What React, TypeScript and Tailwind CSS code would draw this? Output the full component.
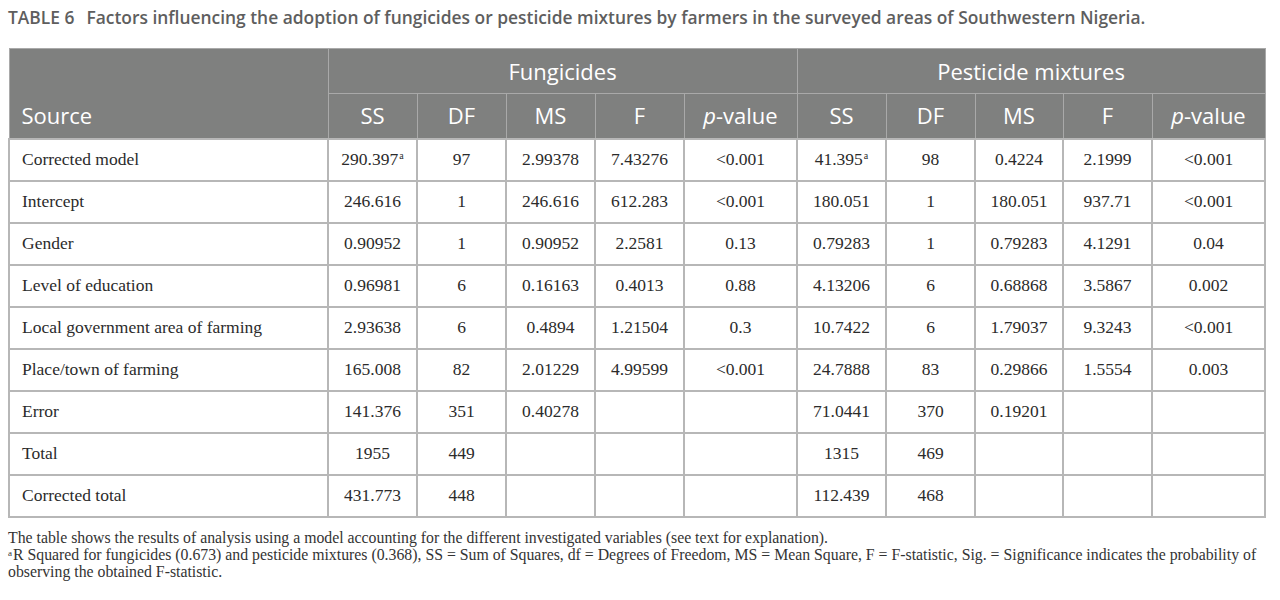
const rows: { src: string; f: string[]; p: string[]; fSup?: boolean; pSup?: boolean }[] = [
  { src: "Corrected model", f: ["290.397", "97", "2.99378", "7.43276", "<0.001"], p: ["41.395", "98", "0.4224", "2.1999", "<0.001"], fSup: true, pSup: true },
  { src: "Intercept", f: ["246.616", "1", "246.616", "612.283", "<0.001"], p: ["180.051", "1", "180.051", "937.71", "<0.001"] },
  { src: "Gender", f: ["0.90952", "1", "0.90952", "2.2581", "0.13"], p: ["0.79283", "1", "0.79283", "4.1291", "0.04"] },
  { src: "Level of education", f: ["0.96981", "6", "0.16163", "0.4013", "0.88"], p: ["4.13206", "6", "0.68868", "3.5867", "0.002"] },
  { src: "Local government area of farming", f: ["2.93638", "6", "0.4894", "1.21504", "0.3"], p: ["10.7422", "6", "1.79037", "9.3243", "<0.001"] },
  { src: "Place/town of farming", f: ["165.008", "82", "2.01229", "4.99599", "<0.001"], p: ["24.7888", "83", "0.29866", "1.5554", "0.003"] },
  { src: "Error", f: ["141.376", "351", "0.40278", "", ""], p: ["71.0441", "370", "0.19201", "", ""] },
  { src: "Total", f: ["1955", "449", "", "", ""], p: ["1315", "469", "", "", ""] },
  { src: "Corrected total", f: ["431.773", "448", "", "", ""], p: ["112.439", "468", "", "", ""] },
];

const widths = [319, 89, 89, 89, 89, 113, 89, 89, 88, 89, 113];

function Sup() {
  return <span className="relative -top-[6px] ml-[1px] text-[10px] leading-none">a</span>;
}

function HeadCell({ children }: { children: React.ReactNode }) {
  return (
    <th className="h-[45px] border border-[#a9a9a9] bg-[#7f807f] text-center align-middle text-[22px] font-normal text-white">
      {children}
    </th>
  );
}

export default function App() {
  const sub = ["SS", "DF", "MS", "F"];
  return (
    <div className="min-h-screen bg-white px-2 pt-[5px] font-['Liberation_Serif',serif] text-[#2b2b2b]">
      {/* Caption */}
      <h1 className="font-['Open_Sans',sans-serif] text-[17.4px] font-semibold leading-[24px] text-[#5e5e5e]">
        TABLE 6<span className="ml-[12px]">Factors influencing the adoption of fungicides or pesticide mixtures by farmers in the surveyed areas of Southwestern Nigeria.</span>
      </h1>

      <table className="mt-[19px] w-[1256px] table-fixed border-collapse">
        <colgroup>
          {widths.map((w, i) => (
            <col key={i} style={{ width: w }} />
          ))}
        </colgroup>
        <thead className="font-['Open_Sans',sans-serif]">
          <tr>
            <th rowSpan={2} className="border border-[#a9a9a9] bg-[#7f807f] pb-[6px] pl-[12px] text-left align-bottom text-[22px] font-normal text-white">
              Source
            </th>
            <th colSpan={5} className="h-[45px] border border-[#a9a9a9] bg-[#7f807f] text-center text-[22px] font-normal text-white">
              Fungicides
            </th>
            <th colSpan={5} className="h-[45px] border border-[#a9a9a9] bg-[#7f807f] text-center text-[22px] font-normal text-white">
              Pesticide mixtures
            </th>
          </tr>
          <tr>
            {sub.map((s) => (
              <HeadCell key={"f" + s}>{s}</HeadCell>
            ))}
            <HeadCell>
              <i>p</i>-value
            </HeadCell>
            {sub.map((s) => (
              <HeadCell key={"p" + s}>{s}</HeadCell>
            ))}
            <HeadCell>
              <i>p</i>-value
            </HeadCell>
          </tr>
        </thead>
        <tbody className="text-[17.5px]">
          {rows.map((r) => (
            <tr key={r.src} className="h-[42px]">
              <td className="border-2 border-[#b7b7b7] pl-[12px] text-left">{r.src}</td>
              {r.f.map((v, i) => (
                <td key={"f" + i} className="border-2 border-[#b7b7b7] text-center">
                  {v}
                  {i === 0 && r.fSup && <Sup />}
                </td>
              ))}
              {r.p.map((v, i) => (
                <td key={"p" + i} className="border-2 border-[#b7b7b7] text-center">
                  {v}
                  {i === 0 && r.pSup && <Sup />}
                </td>
              ))}
            </tr>
          ))}
        </tbody>
      </table>

      {/* Footnotes */}
      <div className="mt-[11px] text-[15.8px] leading-[17px] text-[#333]">
        <p>The table shows the results of analysis using a model accounting for the different investigated variables (see text for explanation).</p>
        <p>
          <span className="mr-[1px] align-[4px] text-[9px] leading-[9px]">a</span>R Squared for fungicides (0.673) and pesticide mixtures (0.368), SS = Sum of Squares, df = Degrees of Freedom, MS = Mean Square, F = F-statistic, Sig. = Significance indicates the probability of observing the obtained F-statistic.
        </p>
      </div>
    </div>
  );
}
